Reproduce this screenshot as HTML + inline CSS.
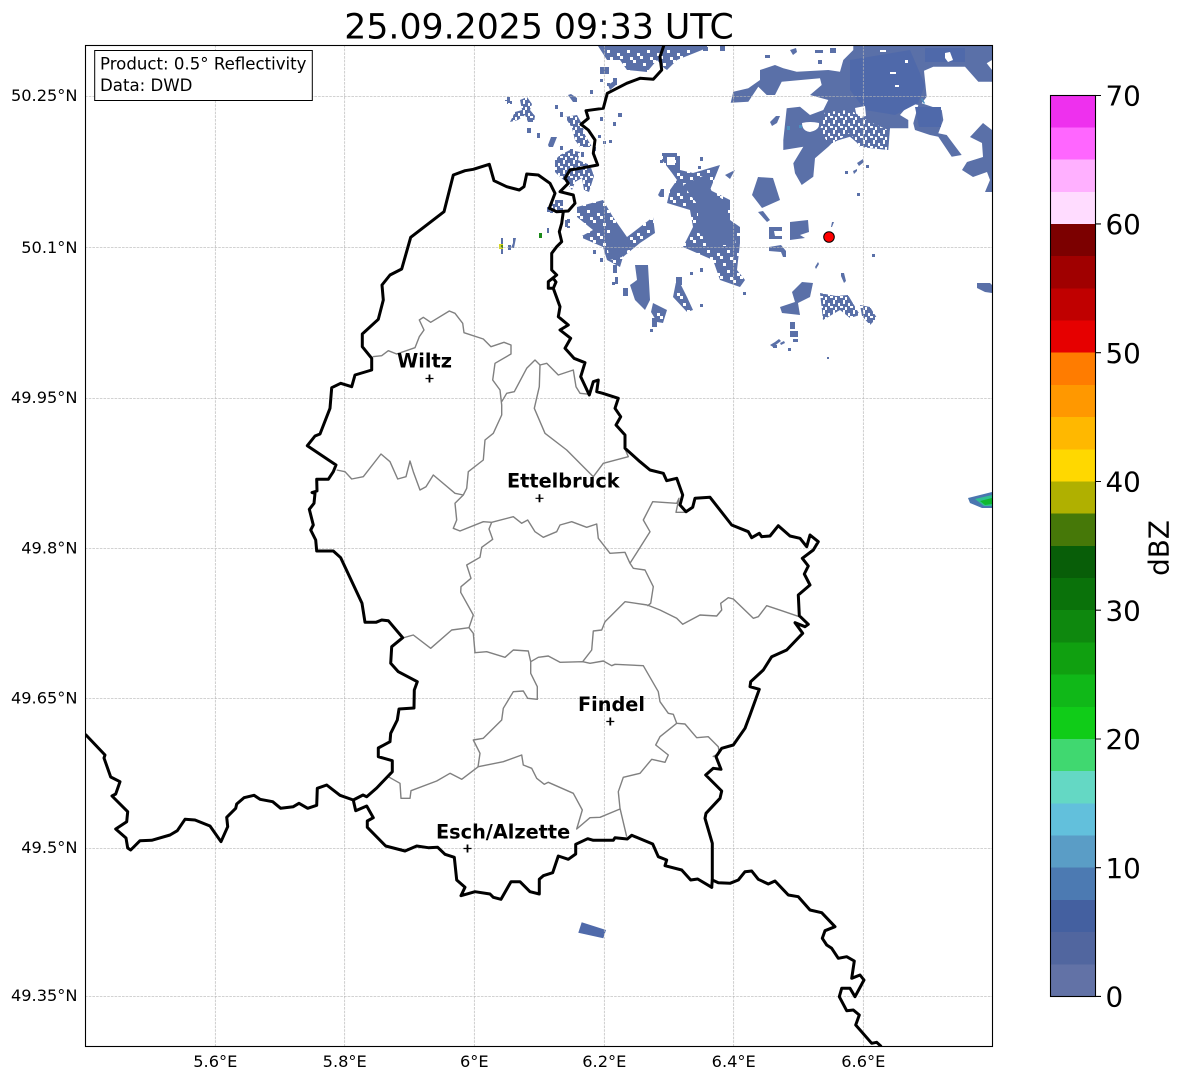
<!DOCTYPE html>
<html>
<head>
<meta charset="utf-8">
<title>Radar</title>
<style>
html,body{margin:0;padding:0;background:#fff}
svg{display:block}
text{font-family:"DejaVu Sans",sans-serif;fill:#000}
</style>
</head>
<body>
<svg xmlns="http://www.w3.org/2000/svg" width="1184" height="1081" viewBox="0 0 1184 1081">
<defs>
<clipPath id="ax"><rect x="85.5" y="45.5" width="907" height="1001"/></clipPath>
<pattern id="s" width="20" height="20" patternUnits="userSpaceOnUse">
<rect width="20" height="20" fill="#5a70a8"/>
<path fill="#fff" d="M3 3h3v3h-3zM13 0h3v3h-3zM7 10h3v3h-3zM17 13h3v3h-3zM0 16h3v3h-3zM10 17h3v3h-3z"/>
</pattern>
<pattern id="l" width="10" height="10" patternUnits="userSpaceOnUse">
<rect width="10" height="10" fill="#5a70a8"/>
<path fill="#fff" d="M3 0h2v4h-2zM8 3h2v3h-2zM0 6h3v2h-3zM5 7h2v3h-2z"/>
</pattern>
</defs>
<rect width="1184" height="1081" fill="#fff"/>

<g clip-path="url(#ax)">
<!-- radar -->
<g fill="#5a70a8">
<path fill="url(#s)" d="M598 46L607 60L620 60L627 70L647 72L657 60L664 68L667 70L677 60L707 48L707 45L598 45Z"/>
<path d="M600 67h9v7h-9zM613 78h4v7h-4zM600 79h3v3h-3zM607 83h3v3h-3zM590 90h3v4h-3zM608 85l6 -4 2 4 -6 5z"/>
<path fill="url(#l)" d="M505 97h5v4h2v3h-5v-3h-2zM510 122L515 112L522 110L520 100L527 97L532 104L530 110L535 116L534 122L528 122L525 115L518 120Z"/>
<path d="M568 95l3 -1 6 4v4h-4zM555 105h3v4h-3zM560 112h3v5h-3zM527 128h4v5h-4zM537 133h3v5h-3z"/>
<path fill="url(#l)" d="M565 117L577 115L582 124L585 135L592 147L580 147L575 140L572 128Z"/>
<path d="M548 145L551 137H557L553 147H549ZM560 146h3v4h-3zM570 149h3v4h-3zM600 117h3v4h-3zM618 113h4v4h-4zM613 122h3v4h-3zM598 135h3v3h-3zM603 141h3v3h-3zM609 140h3v3h-3zM593 147h3v4h-3zM581 152h3v5h-3z"/>
<path fill="url(#l)" d="M555 160L560 155L570 150L580 152L578 160L590 165L594 176L589 192L584 190L582 178L575 182L572 190L566 182L558 175L555 172Z"/>
<path fill="url(#l)" d="M552 200h11v13h-13zM565 219h5v9h-5zM547 207h3v5h-3z"/>
<path fill="url(#s)" d="M577 207L603 200L613 217L627 237L653 217L655 233L640 243L623 257L620 267L607 260L603 247L580 237L593 230L577 217Z"/>
<path d="M605 235L622 232L632 245L622 257L610 260Z"/>
<path d="M593 250h3v4h-3zM600 258h3v4h-3zM613 265h4v8h-4zM615 277h3v7h-3zM612 282h3v3h-3z"/>
<path fill="url(#s)" d="M662 153L680 153L680 170L693 173L720 165L710 190L730 200L730 220L740 227L740 243L737 270L745 280L740 287L720 280L713 260L683 247L693 227L690 210L667 203L670 190L677 180L672 173L662 160Z"/>
<path d="M683 185L705 175L712 192L728 203L728 218L738 228L735 245L712 245L698 232L698 205Z"/>
<path fill="#fff" d="M667 157h8v8h-8z"/>
<path d="M660 160h3v3h-3zM700 157h3v4h-3zM698 166h3v3h-3zM725 175l6 -3 4 -2 -5 9zM658 195l3 -6 3 0 v8h-4zM743 292h3v3h-3zM700 268h3v4h-3zM690 272h3v3h-3z"/>
<path d="M635 265L648 265L650 300L645 310L635 300L630 285L637 280Z"/>
<path fill="url(#s)" d="M653 303L667 310L663 323L657 322L651 312ZM677 277L687 297L693 310L687 312L673 297Z"/>
<path d="M652 318h5v9h-5zM650 329h3v3h-3zM623 288h5v8h-5zM640 294h4v4h-4zM676 277h6v8h-6zM700 304h3v3h-3z"/>
<path d="M752 195L758 177L773 178L780 200L762 208Z"/>
<path d="M758 212l5 -1 7 9 -3 2zM769 227h13v4h-8l1 5h7v3h-13zM790 222L808 220L809 232L800 235L805 238L790 240ZM769 247l12 -2 5 6v6h-3l-2 -5 -12 -1z"/>
<path d="M832 222h2l-2 5h-1zM872 254h3v3h-3zM857 193h3v3h-3zM866 165h3v3h-3zM845 171h3v3h-3zM853 171l4 -2v2l-3 3zM857 163l6 -4 1 3 -5 4zM815 267l3 -5 1 2 -3 5zM841 273h3l2 8 -2 2 -3 -7zM827 357h2v2h-2zM780 343l4 -2 1 2 -4 2zM790 322h5v7h-5zM790 331h8v6h-8zM793 339h5v3h-5zM773 345h4v3h-4zM788 348h3v3h-3z"/>
<!-- NE mass -->
<path d="M730.7 102.7L733.3 91.7L748.3 88.3L760 80L760 70L775 65L783.3 68.3L796.7 71.7L828.3 70L840 71.7L843.3 60L853.3 50L853.3 45L992 45L992 60L986.7 63.3L992 70L992 81.7L978.3 81.7L965 66.7L933.3 66.7L924 70.7L926.7 96.7L921.7 103.3L941.7 110L943.3 120L938.3 133.3L946.7 135L961.7 155L951.7 156.7L938.3 136.7L930 135L915 130L913.3 123.3L918.3 105L910 103.3L900 115L908.3 120L908.3 128.3L890 128.3L888.3 150L861.7 146.7L850 136.7L833.3 141.7L828.3 146.7L815 158.3L813.3 176.7L801.7 185L795 173.3L793.3 163.3L803.3 146.7L783.3 150L783.3 140L786.7 108.3L800 106.7L810 115L823.3 110L828.3 100L810 95L821.7 85L820 78.3L781.7 81.7L775 95L766.7 95L758.3 86.7L748.3 101.7Z"/>
<path fill="#4f69aa" d="M850 60L910 50L925 85L918 103L895 115L865 110L850 90ZM915 107h26v20h-22zM925 48h40v14h-40z"/>
<path fill="#fff" d="M802 123Q810 121 819 123Q820 130 810 132Q802 131 802 123ZM945 53L950 52L953 60L948 62L945 58ZM855 108L865 106L866 116L857 118Z"/>
<path fill="url(#l)" d="M825 112L850 110L870 122L888 130L888 150L860 147L850 133L833 143L828 143L820 130Z"/>
<path fill="#fff" d="M800 57h12v3h-12zM812 62h10v3h-10zM795 50h5v3h-5zM880 50h6v2h-6zM890 72h6v2h-6zM905 60h3v3h-3zM895 85h4v2h-4z"/>
<path d="M765 55h5v3h-5zM790 50l6 -2 1 4 -4 3zM815 50h8v3h-8zM830 48h6v5h-6zM818 60h4v4h-4zM703 47h5v4h-5zM720 45h5v6h-5zM770 122l6 -6 4 0 -3 7 -5 3z"/>
<path d="M970 137L983 123L992 130L992 192L985 192L990 180L987 172L973 177L962 170L967 162L983 157L982 143Z"/>
<path d="M977 283L990 283L992 285V293L985 292L977 288Z"/>
<path fill="#4f6aaa" d="M581.7 922.3L606 930L603.3 938.3L578.3 932.7Z"/>
<!-- south speckle -->
<path d="M792 292L802 282L813 283L810 297L798 303L800 315L782 313L780 307L795 302Z"/>
<path fill="url(#l)" d="M820 293L836 296L848 295L860 315L850 318L840 310L823 320Z"/>
<path fill="url(#l)" d="M860 305L870 307L877 318L870 325L862 316Z"/>
<path d="M770 345l5 -3 4 -3 2 2 -8 6zM783 308h3v5h-3z"/>
<!-- small -->
<path d="M508 245h3v5h-3zM513 238h3l-1 5 -1 5h-3l2 -5zM547 228h2v5h-2zM501 238h2v16h-2z"/>
</g>
<path fill="#4a90c0" d="M787 126h3v4h-3zM799 125h3v3h-3zM922 98l3 5 -1 1 -3 -5z"/>
<rect x="539" y="233" width="3" height="5" fill="#1a8a1a"/>
<rect x="499" y="244" width="4" height="5" fill="#d8d820"/>
<rect x="501" y="245" width="2" height="3" fill="#5a8a10"/>
<path fill="#4a76b0" d="M968 498L992 492V508L982 508L970 503Z"/>
<path fill="#30c090" d="M975 499L992 495V506L984 506Z"/>
<path fill="#10b830" d="M980 501L992 498V504L985 505Z"/>
<!-- grid -->
<g stroke="#b8b8b8" stroke-width="0.7" stroke-dasharray="2.6 1.1" fill="none">
<path d="M215.3 45V1047M344.7 45V1047M474.3 45V1047M604.3 45V1047M733.7 45V1047M863.3 45V1047"/>
<path d="M85 96.3H993M85 247.7H993M85 398.3H993M85 548.7H993M85 698.7H993M85 848.3H993M85 996.3H993"/>
</g>
<!-- cantons -->
<g fill="none" stroke="#808080" stroke-width="1.4" stroke-linejoin="round">
<path d="M372.7 356.7L381.7 355.7L388.3 350.7L396.7 354L415 347.7L419.3 336.7L424 330L419.3 320L423.3 317.3L430.7 322.3L449.3 311L455 313.3L462.7 323.3L464 332.7L483.3 339L491 346.7L504 342.3L511 345L511 354L495 363.3L492.7 380L500 390L501.7 405L501.7 415L493.3 433.3L485 440L483.3 460L468.3 471.7L466.7 488.3L463.3 495"/>
<path d="M501.7 401.7L506.7 393.3L514.3 391.7L526.7 368.3L535 360L540 365L546.7 363.3L558.3 375L573.3 370L576 386.7L580 393.3L590 394.3"/>
<path d="M540 365L539.3 386.7L534.3 408.3L545 433.3L566.7 450L593.3 476.7L603.3 463.3L628.3 456.7L625 449"/>
<path d="M336.7 470L345 471.7L351.7 479L363.3 476.7L381 454L390 461.7L397.7 479L406 476.7L410 461L413.3 471.7L420 490L426 486.7L433.3 475L455 493.3L463.3 495L455 503.3L456.7 520L453.3 528.3L460 531L483.3 521.7L491.7 522.3L513.3 516.7L521.7 523.3L527.7 520L535 531.7L543.3 537.3L556.7 531.7L560 525L571.7 521.7L586.7 527.3L596.7 524L598.3 538.3L610 553.3L625 552.3L630 563.3L633.3 568.3L645 570L653.3 586.7L650.7 603.3L647.3 606"/>
<path d="M630 563.3L650 531.7L643.3 520L652.7 501.7L676.7 503.3L679 498.3L676 512.3L685 512.3"/>
<path d="M647.3 605L625 601.7L605 621.7L601.7 630L593.3 631L591.7 650L582.7 661.7"/>
<path d="M647.3 605L660 610L676.7 618.3L682.7 624.3L700 615L716.7 616L721.7 610L720.7 603.3L728.3 597.7L733.3 599L753.3 618.3L758.3 616.7L766.7 605.7L781.7 610.7L799.3 616.7"/>
<path d="M530.7 661.7L538.3 657.3L548.3 656L560 662.3L582.7 661.7L590 663.3L603.3 661L611.7 665.7L615 664.3L643.3 665.7L658.3 691.7L660 701.7L668.3 713.3L673.3 714.3L676.7 723.3L685 724L696.7 737.7L708.3 736.7L718.3 746.7L719.3 753.3L712.7 756.7"/>
<path d="M676.7 723.3L660 736.7L655.7 745L668.3 755L665 762.3L651.7 759.3L640 773.3L623.3 777.3L618.3 791.7L620 808.3L626.7 836.7"/>
<path d="M620 809L600 817.3L590 817.7L576.7 829L582.3 810L573.3 793.3L548.3 782.3L544.3 784.3L536.7 778.3L531.7 768.3L523.3 765L521.7 755L503.3 761.7L478.3 766.7L461.7 779.3L450 773.3L436.7 781L411 790.7L410 798.3L401 798.3L400 783.3L388.3 776.7"/>
<path d="M478 767L480 753.3L473.3 740L483.3 738.3L501.7 720L503.3 708.3L513.3 691.7L523.3 691L527.7 698.3L537.3 699.3L537.3 686.7L530.7 673.3L530.7 661.7L528.3 651L513.3 650L505 657.3L486.7 651.7L475 652.7L473.3 633.3L469 627.7L451.7 630L430.7 648.3L413.3 635L402.7 638"/>
<path d="M469 627.7L473.3 615L460.7 592.3L461 586.7L471 578.3L466.7 565L480 557.3L481.7 547.3L492.7 539.3L489 529L491.7 522.3"/>
</g>
<!-- borders -->
<g fill="none" stroke="#000" stroke-width="3" stroke-linejoin="round" stroke-linecap="round">
<path d="M86 735L105 755L104 758L110.7 777L120 781.7L115.7 794L112 796L127.7 811.7L126.7 821.7L115.7 829L126 838L127.7 848L130.7 850L140 840.7L151.7 840.3L170 835L177.3 830.7L185 819.3L195 820L210 826L221 841.7L227.7 826.7L226.7 817.3L235.7 808.3L236.7 804L244 797.7L254 795.3L260 799.3L272.7 801.7L280.7 808.3L293.3 806.7L299 803.3L307.7 808.3L316.7 805.3L317.3 788.3L326.7 785L340 795.3L353.3 800L354 803.3L355.7 810.7L366.7 806L373.3 817.7L367.3 821L367.3 827.3L385.7 846L405 851L416.7 846L428.3 847.7L437.7 847.3L445 854.3L454.3 857.3L456.7 880L465 887.3L461 895.7L475 891.7L490 894L493.3 897.3L501 899.3L511 881.7L520 881.7L530 891.7L539.3 894L539.3 879.3L543.3 875.7L552.7 872.7L558.3 856L568.3 859.3L575.7 854L575.7 844.3L587.7 838.7L593.3 840.3L613.3 840.3L615 837.7L627.3 839L631.7 835.3L652.7 844L658.3 856.7L666.7 860L665 865.7L681.7 870L690.7 880L697.7 879L711.7 887.3"/>
<path d="M353.3 800L363 795L366.7 796.7L376.7 788L392.3 771.7L392.3 760.7L378.3 756.7L378.3 748L390 741.7L390.7 733.3L397.3 720L399 709L414 708L414.3 690L417.3 681.7L398.3 671.7L390.7 663.3L391.7 646.7L402.7 637.7L388.3 620.7L381.7 620L376 622.3L365 622.3L362 603.3L340.7 557.7L333.3 551L316.7 551L315.7 540L310.7 530L313.3 525L309.3 509.3L314 503.3L315 493.3L312 492.5L317 491L316.7 479.3L328.3 479.3L333.3 471.7L336 465L307.3 445.7L315 436L320 434L330 408.3L331.7 387.7L340.7 383.3L351.7 386.7L355 375L371.7 370L371.7 358.3L362.3 346.7L362.3 334L378.3 319.3L383.3 300L382 285L390 275L401.7 269L410.7 237.3L444 211.7L453.3 175L465 170.7L473.3 169.3L489.3 164.3L494 180.7L506.7 186.7L519.3 190L524 186.7L526.7 174L538.3 175L550 183.3L555 193.3L549.3 208.3L556.7 211.7L568.3 211L575 203.3L573.3 195L560 191.7L568.3 183.3L565 178.3L570 170L580 168.3L597.7 165L593.3 153.3L595 140L588.3 130L581 124.3L588.3 118.3L586 110.7L603.3 108.3L607.3 93.3L626.7 83.3L640 78.3L653.3 79.3L661.7 70L660 56.7L664 45"/>
<path d="M563.3 211.7L561.7 223.3L559.3 231.7L561.7 241.7L556.7 246.7L551.7 253.3L551.7 270L556.7 275L548.3 281.7L548.3 288.3L553.3 288.3L556 282L553 278M553.3 288.3L560 306.7L558.3 316.7L568.3 325L560 330L570.7 338.3L565 348.3L574 358.3L585 362.7L580.7 376.7L589.3 395L593.3 381.7L598.3 380L596.7 391.7L602.7 393.3L618.3 398.3L615 408.3L620.7 416.7L616 425L625 435L625 448.3L640 461.7L650 470L663.3 473.3L666.7 480.7L676.7 478.3L682.7 495L680 505L686 511.7L692.7 507.3L695 498.3L710 497.3L731.7 525L748.3 531.7L751.7 537.7L759.3 533.3L761.7 536.7L770 536L778.3 525.7L790 536L800 538.3L806.7 546.7L810 535L818.3 541.7L813.3 550L802.3 558.3L808.3 566L804.3 574L810 585L798.3 595L799.3 615.7L808.3 624.3L805 626.7L795 622.7L802.7 633.3L786.7 650L771.7 656.7L763.3 670L750.7 681.7L750 686.7L759.3 689.3L750 715L745 728.3L733.3 745L721.7 748.3L716 756.7L721 769.3L713.3 768.3L705.7 775L721.7 791L720 798.3L706 813.3L705 818.3L712.3 843.3L712.3 880L711.7 887.3"/>
<path d="M712.3 880L718.3 882.7L730 883.3L738.3 880L745 871.7L751.7 871L758.3 879.3L768.3 884L775 881L788.3 895L798.3 896.7L810 910L821.7 912.7L835 926.7L825 930.7L822.3 938.3L826.7 945L831.7 948.3L838.3 958.3L846.7 956.7L854.3 961L851.7 978.3L860 975L864 980L855 996.7L850 988.3L841.7 988.3L839.3 996.7L846.7 1010.7L853.3 1010L859.3 1015L855.7 1025L871.7 1043.3L876.7 1042.3L880.7 1046"/>
</g>
<!-- city markers -->
<g stroke="#000" fill="none">
<path stroke-width="1.2" d="M425.5 378.5h8M535.5 498.3h8M606.3 721.5h8M463.5 848.5h8"/>
<path stroke-width="1.8" d="M429.5 374.5v8M539.5 494.3v8M610.3 717.5v8M467.5 844.5v8"/>
</g>
<!-- radar site -->
<circle cx="829" cy="237" r="5.3" fill="#f00" stroke="#000" stroke-width="1"/>
<g font-size="19.3" font-weight="700">
<text x="397" y="367.5">Wiltz</text>
<text x="507" y="487.7">Ettelbruck</text>
<text x="578" y="711">Findel</text>
<text x="436" y="838.3">Esch/Alzette</text>
</g>
<!-- legend box -->
<rect x="94.7" y="50.5" width="217.6" height="50" fill="#fff" stroke="#000" stroke-width="1"/>
<text x="100" y="69.7" font-size="16.6">Product: 0.5° Reflectivity</text>
<text x="100" y="91" font-size="16.6">Data: DWD</text>
</g>
<rect x="85.5" y="45.5" width="907" height="1001" fill="none" stroke="#000" stroke-width="1.1"/>

<!-- title -->
<text x="539" y="38.5" font-size="34.7" text-anchor="middle">25.09.2025 09:33 UTC</text>

<!-- axis labels -->
<g font-size="16.2" text-anchor="end">
<text x="77.5" y="101">50.25°N</text>
<text x="77.5" y="253">50.1°N</text>
<text x="77.5" y="403">49.95°N</text>
<text x="77.5" y="553.5">49.8°N</text>
<text x="77.5" y="703.5">49.65°N</text>
<text x="77.5" y="853">49.5°N</text>
<text x="77.5" y="1001">49.35°N</text>
</g>
<g font-size="16.2" text-anchor="middle">
<text x="215.3" y="1067">5.6°E</text>
<text x="344.7" y="1067">5.8°E</text>
<text x="474.3" y="1067">6°E</text>
<text x="604.3" y="1067">6.2°E</text>
<text x="733.7" y="1067">6.4°E</text>
<text x="863.3" y="1067">6.6°E</text>
</g>

<!-- colorbar -->
<g shape-rendering="crispEdges">
<rect x="1050.5" y="964.3" width="45" height="32.2" fill="#6272a6"/>
<rect x="1050.5" y="932.1" width="45" height="32.2" fill="#51669f"/>
<rect x="1050.5" y="899.9" width="45" height="32.2" fill="#4460a0"/>
<rect x="1050.5" y="867.7" width="45" height="32.2" fill="#4c7ab2"/>
<rect x="1050.5" y="835.5" width="45" height="32.2" fill="#5a9dc6"/>
<rect x="1050.5" y="803.4" width="45" height="32.2" fill="#62c0dc"/>
<rect x="1050.5" y="771.2" width="45" height="32.2" fill="#64d8c4"/>
<rect x="1050.5" y="739" width="45" height="32.2" fill="#40d870"/>
<rect x="1050.5" y="706.8" width="45" height="32.2" fill="#10cc18"/>
<rect x="1050.5" y="674.6" width="45" height="32.2" fill="#10b818"/>
<rect x="1050.5" y="642.4" width="45" height="32.2" fill="#10a010"/>
<rect x="1050.5" y="610.2" width="45" height="32.2" fill="#0e880e"/>
<rect x="1050.5" y="578" width="45" height="32.2" fill="#0a720a"/>
<rect x="1050.5" y="545.8" width="45" height="32.2" fill="#085e08"/>
<rect x="1050.5" y="513.6" width="45" height="32.2" fill="#467808"/>
<rect x="1050.5" y="481.5" width="45" height="32.2" fill="#b0b000"/>
<rect x="1050.5" y="449.3" width="45" height="32.2" fill="#ffd800"/>
<rect x="1050.5" y="417.1" width="45" height="32.2" fill="#ffb800"/>
<rect x="1050.5" y="384.9" width="45" height="32.2" fill="#ff9800"/>
<rect x="1050.5" y="352.7" width="45" height="32.2" fill="#ff7c00"/>
<rect x="1050.5" y="320.5" width="45" height="32.2" fill="#e60000"/>
<rect x="1050.5" y="288.3" width="45" height="32.2" fill="#c00000"/>
<rect x="1050.5" y="256.1" width="45" height="32.2" fill="#a00000"/>
<rect x="1050.5" y="223.9" width="45" height="32.2" fill="#7c0000"/>
<rect x="1050.5" y="191.7" width="45" height="32.2" fill="#ffdcff"/>
<rect x="1050.5" y="159.6" width="45" height="32.2" fill="#ffb0ff"/>
<rect x="1050.5" y="127.4" width="45" height="32.2" fill="#ff66ff"/>
<rect x="1050.5" y="95.5" width="45" height="32" fill="#ee30ee"/>
</g>
<rect x="1050.5" y="95.5" width="45" height="901" fill="none" stroke="#000" stroke-width="1.1"/>
<path stroke="#000" stroke-width="1.1" d="M1095.5 996.4h5.5M1095.5 867.7h5.5M1095.5 739h5.5M1095.5 610.2h5.5M1095.5 481.5h5.5M1095.5 352.7h5.5M1095.5 223.9h5.5M1095.5 95.5h5.5"/>
<g font-size="27.78">
<text x="1105.5" y="1006.5">0</text>
<text x="1105.5" y="878">10</text>
<text x="1105.5" y="749">20</text>
<text x="1105.5" y="620.5">30</text>
<text x="1105.5" y="491.5">40</text>
<text x="1105.5" y="363">50</text>
<text x="1105.5" y="234">60</text>
<text x="1105.5" y="105.5">70</text>
</g>
<text transform="translate(1168.5 548) rotate(-90)" font-size="27.78" text-anchor="middle">dBZ</text>
</svg>
</body>
</html>
